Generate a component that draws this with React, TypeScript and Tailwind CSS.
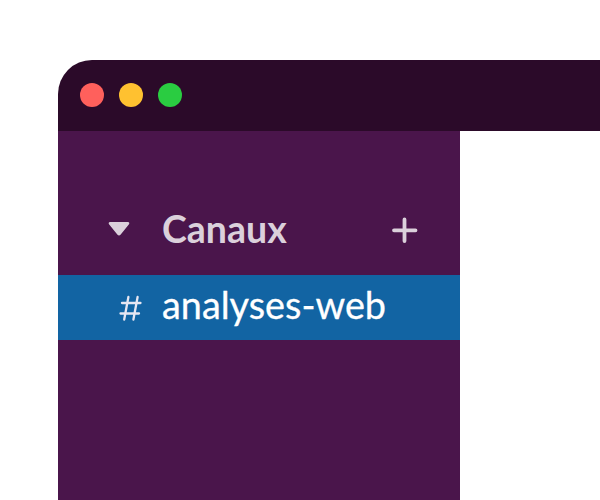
export default function App() {
  return (
    <div className="h-[500px] w-[600px] overflow-hidden bg-white pt-[60px] pl-[58px] font-['Lato',sans-serif]">
      <div className="flex h-[440px] flex-col overflow-hidden rounded-tl-[34px]">
        <header className="flex h-[71px] shrink-0 items-center gap-[15px] bg-[#2b0a29] pb-[2px] pl-[21.6px]">
          <span className="size-6 rounded-full bg-[#ff605c]" />
          <span className="size-6 rounded-full bg-[#ffc130]" />
          <span className="size-6 rounded-full bg-[#2acc41]" />
        </header>
        <aside className="w-[402px] grow bg-[#4a154b] pt-[54px]">
          <div className="flex h-[90px] items-center pl-[50px]">
            <svg className="mb-[3px] h-4 w-[22px]" viewBox="0 0 22 16">
              <path d="M2 1h18c1.2 0 1.7 1.4 1 2.2l-8.5 10.5c-.8 1-2.2 1-3 0L1 3.2C.3 2.4.8 1 2 1z" fill="#dbd0db" />
            </svg>
            <h1 className="mb-[2px] ml-[32px] w-[229px] text-[37.5px] font-bold text-[#dbd0db]">Canaux</h1>
            <svg className="size-7" viewBox="0 0 28 28" stroke="#dbd0db" strokeWidth="3.8" strokeLinecap="round">
              <path d="M13.5 3.5v21.5M3 14.3h21.5" />
            </svg>
          </div>
          <div className="flex h-[65px] items-center bg-[#1264a3] pl-[61px] text-white">
            <svg className="mr-[19px] h-[26px] w-6" viewBox="0 0 24 26" fill="none" stroke="#e6e6f2" strokeWidth="2.3" strokeLinecap="round">
              <path d="M9.4 2L5.2 24.5M18.6 2L14.4 24.5M3 8H21.5M1.5 18.5H20" />
            </svg>
            <span className="mb-[5px] text-[37.8px] [-webkit-text-stroke:0.3px_white]">analyses-web</span>
          </div>
        </aside>
      </div>
    </div>
  );
}
